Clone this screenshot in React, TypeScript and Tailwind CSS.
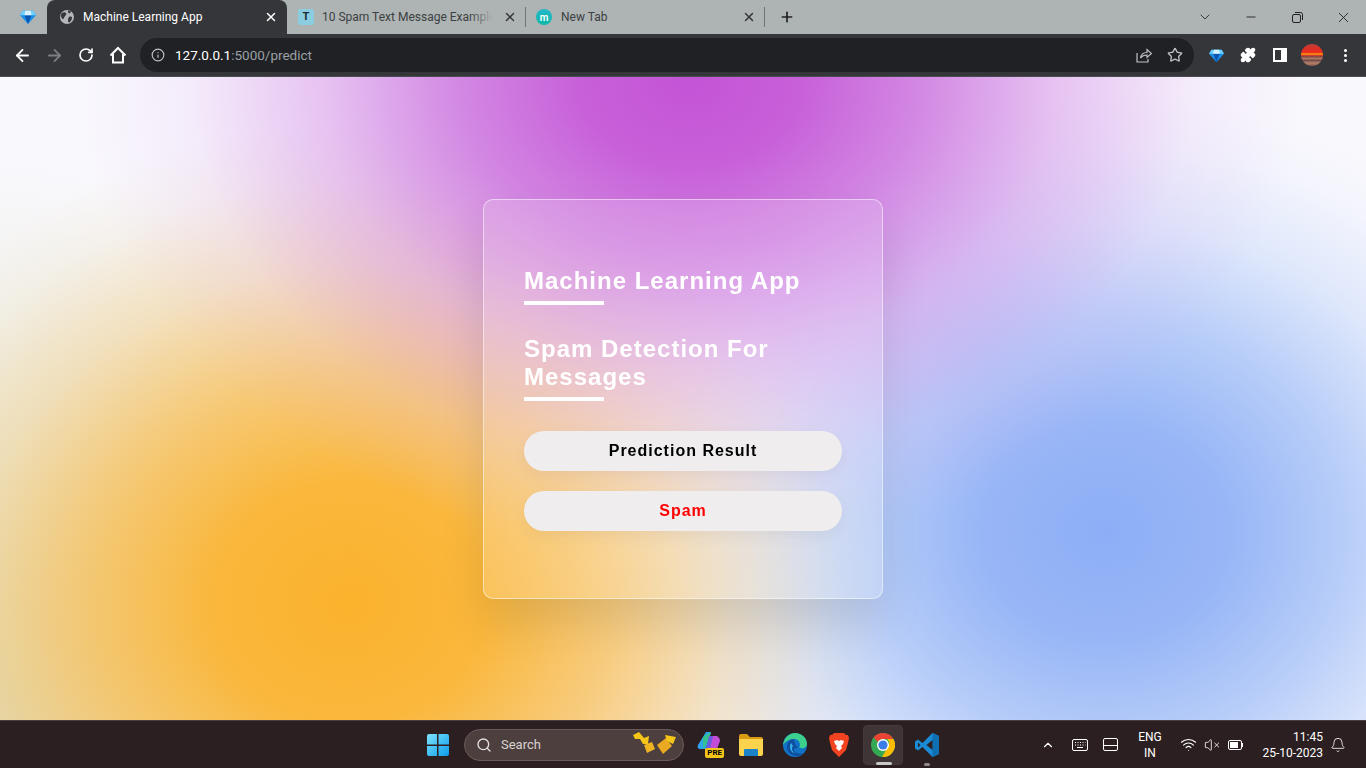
import {
  ArrowLeft,
  ArrowRight,
  RotateCw,
  Info,
  Star,
  Puzzle,
  X,
  Plus,
  ChevronDown,
  ChevronUp,
  Minus,
  Search,
  Wifi,
  VolumeX,
  Bell,
} from "lucide-react";

function Gem({ size = 18 }: { size?: number }) {
  return (
    <svg width={size} height={size} viewBox="0 0 18 18">
      <path d="M3 2h12l3 5-9 10L0 7z" fill="#1d8fe8" />
      <path d="M3 2h12l3 5H0z" fill="#6fd0ff" />
      <path d="M5 7h8l-4 10z" fill="#0a56b0" />
      <path d="M6 2h6l1 5H5z" fill="#d8f3ff" />
    </svg>
  );
}

function Globe() {
  return (
    <svg width="16" height="16" viewBox="0 0 16 16">
      <circle cx="8" cy="8" r="7" fill="#b4b6b9" />
      <path d="M3 4c2-1 3-1 4 0s0 2-1 3-1 3-2 3-2-2-2-3 0-2 1-3zM10 8c2-1 3 0 3 1s-1 3-2 4-2 0-2-1 0-3 1-4z" fill="#35363a" />
      <path d="M9 1.500l3 1-1 2-2-1z" fill="#35363a" />
    </svg>
  );
}

function WindowsLogo() {
  return (
    <svg width="24" height="24" viewBox="0 0 24 24">
      <defs>
        <linearGradient id="win" x1="0" y1="0" x2="1" y2="1">
          <stop offset="0" stopColor="#7fe3ff" />
          <stop offset="1" stopColor="#0a9be8" />
        </linearGradient>
      </defs>
      <path d="M1 3a2 2 0 0 1 2-2h8v10.500H1zM12.500 1H21a2 2 0 0 1 2 2v8.500H12.500zM1 13h10v10H3a2 2 0 0 1-2-2zM12.500 13H23v8a2 2 0 0 1-2 2h-8.500z" fill="url(#win)" />
    </svg>
  );
}

function CopilotIcon() {
  return (
    <div className="relative h-[28px] w-[26px]">
      <svg width="24" height="22" viewBox="0 0 24 22" className="ml-[1px]">
        <path d="M9 1h5l-5 17H3C1 18 0 16 1 14z" fill="#2fa4e8" />
        <path d="M6 6l8-5-2 8-6 9z" fill="#35c18f" />
        <path d="M12 5h7c2 0 4 2 4 5l-3 8h-9z" fill="#c24dd6" />
        <path d="M12 5h4l-3 13h-4z" fill="#6b5be0" />
      </svg>
      <div className="absolute right-[-2px] bottom-[1px] rounded-[2px] bg-[#f5c518] px-[2px] text-[8px] leading-[10px] font-bold text-black">
        PRE
      </div>
    </div>
  );
}

function FolderIcon() {
  return (
    <svg width="24" height="22" viewBox="0 0 24 22">
      <path d="M0 2a2 2 0 0 1 2-2h6l3 3h11a2 2 0 0 1 2 2v3H0z" fill="#d99a14" />
      <path d="M0 5h24v15a2 2 0 0 1-2 2H2a2 2 0 0 1-2-2z" fill="#fcd34d" />
      <path d="M6 15h12a1 1 0 0 1 1 1v6H5v-6a1 1 0 0 1 1-1z" fill="#1d83c9" />
    </svg>
  );
}

function EdgeIcon() {
  return (
    <svg width="24" height="24" viewBox="0 0 24 24">
      <circle cx="12" cy="12" r="12" fill="#1173c7" />
      <path d="M0 12C1 4 7 0 12 0c7 0 12 5 12 11 0 3-3 5-6 4s-1-1-1-3c0-4-3-6-6-6-5 0-9 3-11 6z" fill="#3ccf8e" />
      <path d="M11 6c-4 0-7 3-7 8 0 5 4 9 10 9 2 0 4-1 6-3-4 1-9 0-9-3 0-2 2-2 5-2-1 0-5-4-5-9z" fill="#0f4f9e" />
      <path d="M8 10c-2 3-1 9 4 11-3-3-4-6-2-8z" fill="#38b4ea" />
    </svg>
  );
}

function BraveIcon() {
  return (
    <svg width="20" height="24" viewBox="0 0 20 24">
      <path d="M5 0h10l2 2 2 0 1 3-1 5-2 7-7 7-7-7-2-7L0 5l1-3 2 0z" fill="#f1431f" />
      <path d="M5 8l3-1 2 1 2-1 3 1-1 3-2 2 1 2-3 3-3-3 1-2-2-2z" fill="#fff" />
    </svg>
  );
}

function ChromeIcon() {
  return (
    <svg width="24" height="24" viewBox="0 0 24 24">
      <circle cx="12" cy="12" r="12" fill="#34a853" />
      <path d="M12 0a12 12 0 0 1 10.400 6H12a6 6 0 0 0-5.200 3L2.600 4.500A12 12 0 0 1 12 0z" fill="#ea4335" />
      <path d="M22.400 6A12 12 0 0 1 11 24l5.200-9a6 6 0 0 0 0-9z" fill="#fbbc04" />
      <circle cx="12" cy="12" r="6" fill="#fff" />
      <circle cx="12" cy="12" r="4.600" fill="#3b7de8" />
    </svg>
  );
}

function VsCodeIcon() {
  return (
    <svg width="24" height="24" viewBox="0 0 24 24">
      <path d="M17.500 0L24 3v18l-6.500 3-10-10L3 17.500 0 15.500v-7L3 6.500 7.500 10z" fill="#1a8ad4" />
      <path d="M17.500 0L24 3v18l-6.500 3z" fill="#0f6fb5" />
      <path d="M17.500 7l-6 5 6 5z" fill="#2b2022" />
      <path d="M3 9.500L5.500 12 3 14.500z" fill="#2b2022" />
    </svg>
  );
}

function HomeIcon() {
  return (
    <svg width="18" height="18" viewBox="0 0 18 18" fill="none" stroke="white" strokeWidth="2" strokeLinejoin="miter">
      <path d="M1.500 9.500L9 2l7.500 7.500" />
      <path d="M4 8v8.500h10V8" />
    </svg>
  );
}

function ShareIcon() {
  return (
    <svg width="16" height="16" viewBox="0 0 16 16" fill="none" stroke="#bdc1c6" strokeWidth="1.200">
      <path d="M1 6v9h11v-3" />
      <path d="M4.500 11c.5-3.500 3-5.500 6.500-5.500V2.500l4.500 4-4.500 4V8c-3 0-5 1-6.500 3z" />
    </svg>
  );
}

function KeyboardIcon() {
  return (
    <svg width="16" height="12" viewBox="0 0 16 12" fill="none" stroke="white">
      <rect x="0.500" y="0.500" width="15" height="11" rx="1.500" />
      <path d="M3 3.500h1M5.500 3.500h1M8 3.500h1M10.500 3.500h1M13 3.500h.5M3 6h1M5.500 6h1M8 6h1M10.500 6h1M13 6h.5M5 8.500h6" />
    </svg>
  );
}

function TabClose({ dark }: { dark?: boolean }) {
  return <X size={14} strokeWidth={2.5} className={dark ? "text-[#35363a]" : "text-white"} />;
}

function TabStrip() {
  return (
    <div className="flex h-[34px] shrink-0 items-center bg-[#aeb4b3]">
      <div className="flex w-[47px] justify-center pl-[9px]">
        <Gem size={16} />
      </div>

      <div className="flex h-[34px] w-[240px] items-center self-end rounded-t-lg bg-[#35363a] pr-[9px] pl-[12px]">
        <Globe />
        <span className="ml-[8px] flex-1 text-[12px] text-white">Machine Learning App</span>
        <TabClose />
      </div>

      <div className="flex h-[34px] w-[238px] items-center pr-[8px] pl-[11px]">
        <div className="flex h-[16px] w-[16px] items-center justify-center rounded-[2px] bg-[#8bcde0] text-[11px] font-bold text-[#1f2b33]">
          T
        </div>
        <div className="relative ml-[8px] flex-1 overflow-hidden text-[12px] whitespace-nowrap text-[#3c4043]">
          10 Spam Text Message Examples
          <div className="absolute inset-y-0 right-0 w-[24px] bg-gradient-to-r from-transparent to-[#aeb4b3]" />
        </div>
        <div className="ml-[10px]">
          <TabClose dark />
        </div>
      </div>

      <div className="h-[20px] w-[1px] bg-[#6f7473]" />

      <div className="flex h-[34px] w-[238px] items-center pr-[8px] pl-[10px]">
        <div className="flex h-[16px] w-[16px] items-center justify-center rounded-full bg-gradient-to-b from-[#22b8c9] to-[#10b8a6] text-[10px] font-semibold text-white">
          m
        </div>
        <span className="ml-[9px] flex-1 text-[12px] text-[#3c4043]">New Tab</span>
        <TabClose dark />
      </div>

      <div className="h-[20px] w-[1px] bg-[#6f7473]" />

      <div className="ml-[14px]">
        <Plus size={16} strokeWidth={2.5} className="text-[#202124]" />
      </div>

      <div className="ml-auto flex items-center text-[#202124]">
        <div className="flex w-[46px] justify-center">
          <ChevronDown size={16} strokeWidth={1.25} />
        </div>
        <div className="flex w-[46px] justify-center">
          <Minus size={14} strokeWidth={1.5} />
        </div>
        <div className="flex w-[46px] justify-center">
          <svg width="11" height="11" viewBox="0 0 11 11" fill="none" stroke="currentColor">
            <rect x="0.500" y="2.500" width="8" height="8" rx="1.500" />
            <path d="M3 .5h5.500a2 2 0 0 1 2 2V8" />
          </svg>
        </div>
        <div className="flex w-[46px] justify-center">
          <X size={17} strokeWidth={1.25} />
        </div>
      </div>
    </div>
  );
}

function Toolbar() {
  return (
    <div className="flex h-[43px] shrink-0 items-center border-b border-[#4a4b50] bg-[#35363a] pl-[6px]">
      <div className="flex w-[32px] justify-center">
        <ArrowLeft size={19} strokeWidth={2.25} className="text-white" />
      </div>
      <div className="flex w-[32px] justify-center">
        <ArrowRight size={19} strokeWidth={2.25} className="text-[#7d7e81]" />
      </div>
      <div className="flex w-[32px] justify-center">
        <RotateCw size={16} strokeWidth={2.5} className="text-white" />
      </div>
      <div className="flex w-[32px] justify-center">
        <HomeIcon />
      </div>

      <div className="ml-[6px] flex h-[34px] w-[1054px] items-center rounded-full bg-[#202124] pr-[10px] pl-[11px]">
        <Info size={14} className="text-[#bdc1c6]" />
        <span className="ml-[10px] flex-1 text-[13.5px] text-[#9aa0a6]">
          <span className="text-white">127.0.0.1</span>:5000/predict
        </span>
        <div className="mr-[15px]">
          <ShareIcon />
        </div>
        <Star size={16} strokeWidth={2} className="mr-[1px] text-[#bdc1c6]" />
      </div>

      <div className="ml-[6px] flex w-[32px] justify-center">
        <Gem size={15} />
      </div>
      <div className="flex w-[32px] justify-center">
        <Puzzle size={16} className="fill-white text-white" />
      </div>
      <div className="flex w-[32px] justify-center">
        <div className="flex h-[14px] w-[14px] justify-start border-2 border-white">
          <div className="w-[6px] bg-transparent" />
          <div className="w-[4px] bg-white" />
        </div>
      </div>
      <div className="flex w-[32px] justify-center">
        <div className="h-[22px] w-[22px] rounded-full bg-[linear-gradient(180deg,#b8413c_0%,#d8302a_20%,#ee2a1c_38%,#f5a010_46%,#d8392c_52%,#7d4a44_58%,#b27a66_66%,#6e4a48_74%,#b58068_86%,#8a5a50_100%)]" />
      </div>
      <div className="flex w-[34px] flex-col items-center gap-[2px]">
        <div className="h-[3px] w-[3px] rounded-full bg-white" />
        <div className="h-[3px] w-[3px] rounded-full bg-white" />
        <div className="h-[3px] w-[3px] rounded-full bg-white" />
      </div>
    </div>
  );
}

function Card() {
  return (
    <div className="h-[400px] w-[400px] rounded-[10px] border border-white/50 bg-white/15 px-[40px] pt-[67px] font-['Liberation_Sans',Arial,sans-serif] shadow-[0_25px_45px_rgba(0,0,0,0.1)] backdrop-blur-[25px]">
      <h2 className="text-[24px] leading-[28px] font-bold tracking-[1px] text-white">Machine Learning App</h2>
      <div className="mt-[6px] h-[4px] w-[80px] bg-white" />
      <h2 className="mt-[30px] text-[24px] leading-[28px] font-bold tracking-[1px] text-white">
        Spam Detection For Messages
      </h2>
      <div className="mt-[6px] h-[4px] w-[80px] bg-white" />
      <div className="mt-[30px] flex h-[40px] w-[318px] items-center justify-center rounded-full bg-[#efedee] text-[16px] font-bold tracking-[1px] text-black shadow-[0_5px_15px_rgba(0,0,0,0.05)]">
        Prediction Result
      </div>
      <div className="mt-[20px] flex h-[40px] w-[318px] items-center justify-center rounded-full bg-[#efedee] text-[16px] font-bold tracking-[1px] text-[#ff0000] shadow-[0_5px_15px_rgba(0,0,0,0.05)]">
        Spam
      </div>
    </div>
  );
}

function Taskbar() {
  return (
    <div className="flex h-[48px] shrink-0 items-center border-t border-[#4a3d3f] bg-[#2b1f21] text-white">
      <div className="ml-[426px]">
        <WindowsLogo />
      </div>

      <div className="ml-[14px] flex h-[32px] w-[220px] items-center rounded-full border border-[#6b5a5a] bg-[#4e3f3f] pr-[6px] pl-[11px]">
        <Search size={16} className="text-[#e6e1e1]" />
        <span className="ml-[9px] flex-1 text-[13px] text-[#d8d2d2]">Search</span>
        <svg width="44" height="28" viewBox="0 0 44 28">
          <path d="M0 4l6-3 5 6 5-2-1 8-5 0-3-5-5 0z" fill="#f5c518" />
          <path d="M11 14l8-3 3 7-8 4z" fill="#eeb422" />
          <path d="M24 14l9-7 6 8-9 8z" fill="#e9a920" />
          <path d="M32 4l11 2-3 7-6-3z" fill="#f5c518" />
        </svg>
      </div>

      <div className="ml-[12px] flex w-[26px] justify-center">
        <CopilotIcon />
      </div>
      <div className="ml-[17px]">
        <FolderIcon />
      </div>
      <div className="ml-[20px]">
        <EdgeIcon />
      </div>
      <div className="ml-[22px]">
        <BraveIcon />
      </div>

      <div className="relative ml-[14px] flex h-[40px] w-[40px] items-center justify-center rounded-[4px] border border-[#453a3c] bg-[#3f3436]">
        <ChromeIcon />
        <div className="absolute bottom-[-1px] left-[12px] h-[3px] w-[16px] rounded-full bg-[#c9c9c9]" />
      </div>

      <div className="relative ml-[12px] flex h-[40px] w-[24px] items-center justify-center">
        <VsCodeIcon />
        <div className="absolute bottom-[-1px] left-[9px] h-[3px] w-[6px] rounded-full bg-[#8f8a8b]" />
      </div>

      <div className="ml-[102px] flex w-[14px] justify-center">
        <ChevronUp size={18} strokeWidth={2} />
      </div>
      <div className="ml-[17px] flex w-[16px] justify-center">
        <KeyboardIcon />
      </div>
      <div className="ml-[15px]">
        <div className="flex h-[13px] w-[15px] flex-col justify-end rounded-[2px] border border-white">
          <div className="h-[5px] border-t border-white" />
        </div>
      </div>
      <div className="ml-[17px] w-[30px] text-center text-[12px] leading-[16px]">
        <div>ENG</div>
        <div>IN</div>
      </div>
      <div className="ml-[15px]">
        <Wifi size={17} strokeWidth={1.5} />
      </div>
      <div className="ml-[7px]">
        <VolumeX size={16} strokeWidth={1.25} />
      </div>
      <div className="ml-[8px] flex items-center">
        <div className="flex h-[10px] w-[14px] items-center rounded-[2px] border border-white p-[1px]">
          <div className="h-full w-[8px] bg-white" />
        </div>
        <div className="h-[4px] w-[1px] bg-white" />
      </div>
      <div className="ml-[16px] w-[64px] text-right text-[12px] leading-[16px]">
        <div>11:45</div>
        <div>25-10-2023</div>
      </div>
      <div className="ml-[7px]">
        <Bell size={16} strokeWidth={1.25} />
      </div>
    </div>
  );
}

export default function App() {
  return (
    <div className="flex h-screen w-full flex-col overflow-hidden font-['Roboto','Noto_Sans',sans-serif]">
      <TabStrip />
      <Toolbar />

      {/* Blurred colour blobs behind the glass card */}
      <main className="flex flex-1 items-center justify-center bg-[#f9f8fd] bg-[radial-gradient(ellipse_610px_470px_at_690px_5px,rgba(196,84,214,1)_0%,rgba(197,88,215,0.95)_18%,rgba(200,105,220,0.78)_38%,rgba(208,130,228,0.45)_60%,rgba(218,170,238,0.16)_82%,rgba(225,190,240,0)_100%),radial-gradient(ellipse_540px_480px_at_350px_525px,rgba(251,178,45,1)_0%,rgba(250,180,50,0.95)_25%,rgba(247,186,75,0.72)_48%,rgba(240,196,115,0.38)_70%,rgba(232,210,160,0.12)_88%,rgba(230,220,180,0)_100%),radial-gradient(ellipse_500px_440px_at_1105px_455px,rgba(141,174,246,1)_0%,rgba(146,178,246,0.94)_25%,rgba(160,190,247,0.74)_48%,rgba(185,208,249,0.42)_70%,rgba(205,222,251,0.14)_88%,rgba(215,228,252,0)_100%),radial-gradient(ellipse_420px_560px_at_0px_640px,rgba(222,222,190,0.95)_0%,rgba(230,230,205,0.6)_50%,rgba(240,240,230,0)_100%)]">
        <Card />
      </main>

      <Taskbar />
    </div>
  );
}
